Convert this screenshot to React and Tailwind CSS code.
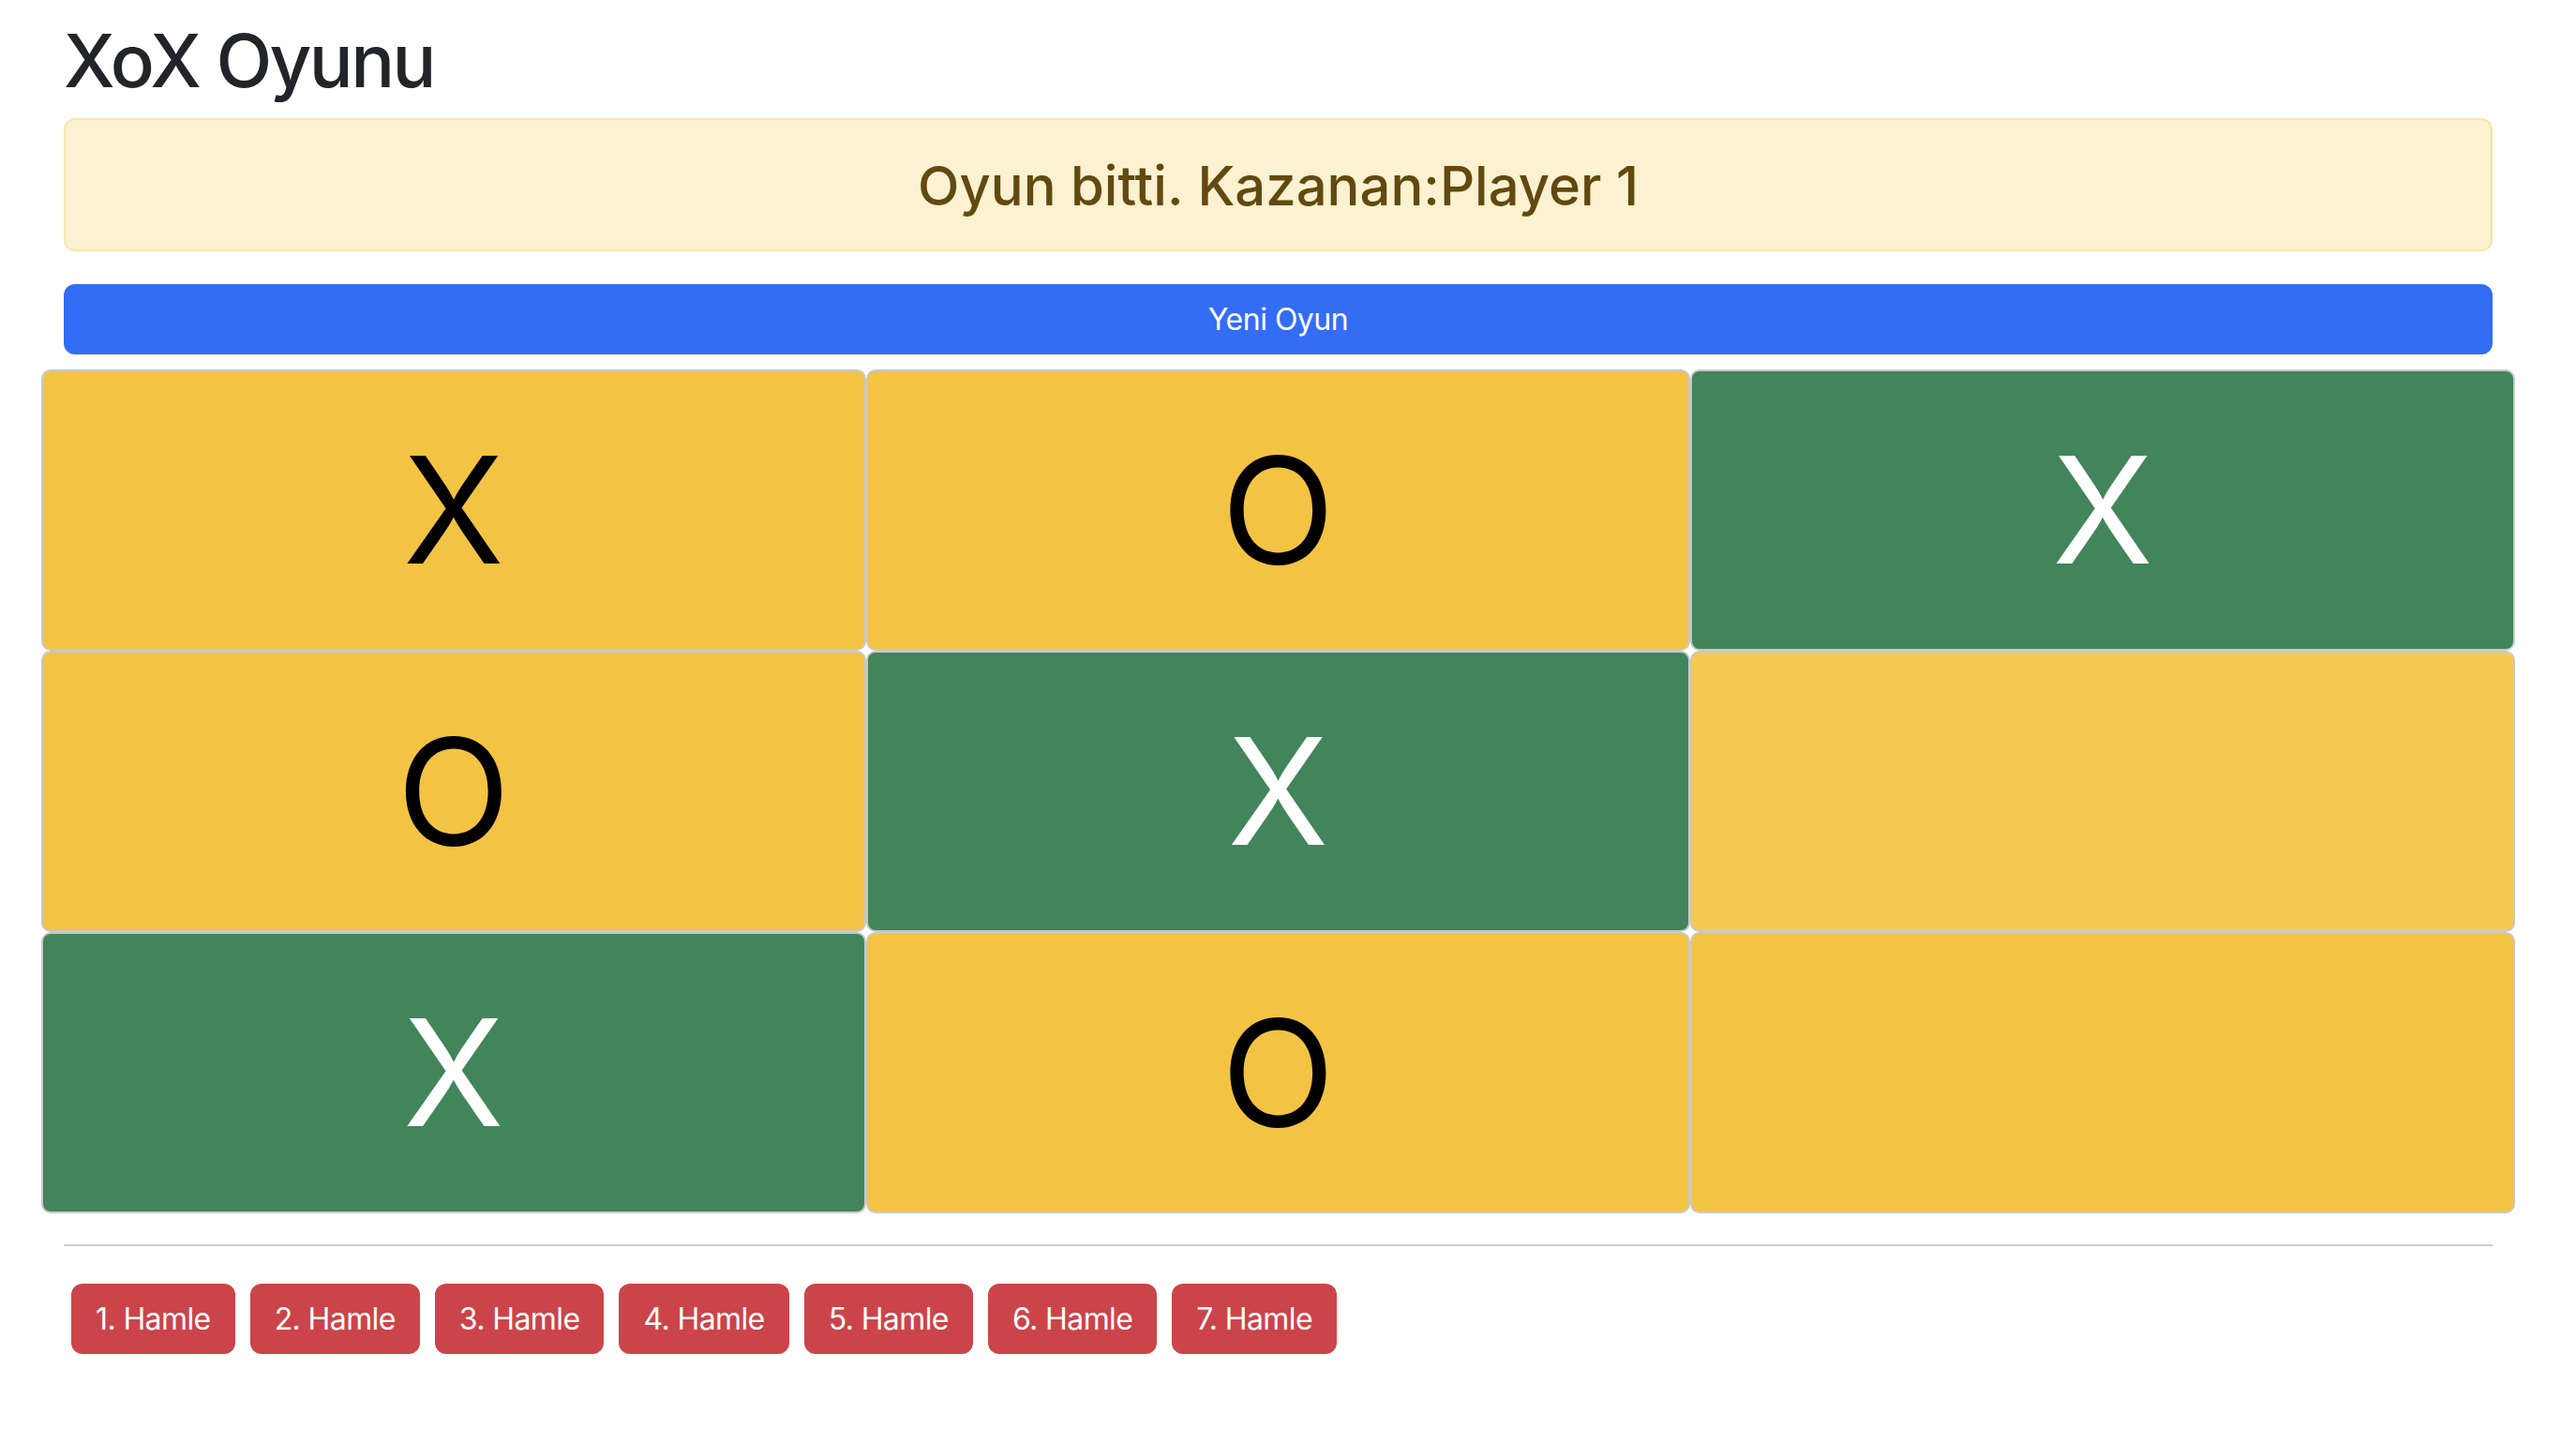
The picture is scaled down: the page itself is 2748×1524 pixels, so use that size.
const board = [
  ["X", "O", "X"],
  ["O", "X", ""],
  ["X", "O", ""],
];

// cells on the winning diagonal are green
const winners = ["0-2", "1-1", "2-0"];

const Cell = ({ value, win, light }) => {
  const bg = win ? "bg-[#42855a]" : light ? "bg-[#f6ca50]" : "bg-[#f3c343]";
  const color = win ? "text-white" : "text-black";
  return (
    <div
      className={`h-[300px] border-2 border-[#c8c8c8] rounded-[10px] flex items-center justify-center ${bg}`}
    >
      <span className={`text-[158px] leading-none font-normal ${color}`}>{value}</span>
    </div>
  );
};

export default function App() {
  const moves = [1, 2, 3, 4, 5, 6, 7];

  return (
    <div
      className="min-h-screen bg-white pt-[17px]"
      style={{ fontFamily: "Inter, 'Liberation Sans', sans-serif" }}
    >
      {/* Header */}
      <div className="ml-[68px] mr-[89px]">
        <h1 className="text-[78px] leading-[96px] font-medium text-[#212529] tracking-[-2.6px] mb-[13px]">
          XoX Oyunu
        </h1>

        <div className="h-[142px] bg-[#fcf2d1] border-2 border-[#f9e5a5] rounded-[12px] flex items-center justify-center">
          <h3 className="text-[58px] font-medium text-[#62490f] mt-[2px]">
            Oyun bitti. Kazanan:Player 1
          </h3>
        </div>

        <button className="w-full h-[75px] mt-[35px] bg-[#336df3] text-white text-[32px] tracking-[-0.5px] rounded-[12px]">
          Yeni Oyun
        </button>
      </div>

      {/* Board */}
      <div className="ml-[44px] mr-[65px] mt-[16px] grid grid-cols-3">
        {board.map((row, r) =>
          row.map((v, c) => (
            <Cell
              key={`${r}-${c}`}
              value={v}
              win={winners.includes(`${r}-${c}`)}
              light={r === 1 && c === 2}
            />
          ))
        )}
      </div>

      <div className="ml-[68px] mr-[89px]">
        <hr className="mt-[33px] border-0 border-t-2 border-[#cfcfcf]" />

        {/* Move history */}
        <div className="flex mt-[40px]">
          {moves.map((m) => (
            <button
              key={m}
              className="mx-[8px] h-[75px] px-[26px] bg-[#cb444a] text-white text-[32px] tracking-[-0.6px] rounded-[12px]"
            >
              {m}. Hamle
            </button>
          ))}
        </div>
      </div>
    </div>
  );
}
